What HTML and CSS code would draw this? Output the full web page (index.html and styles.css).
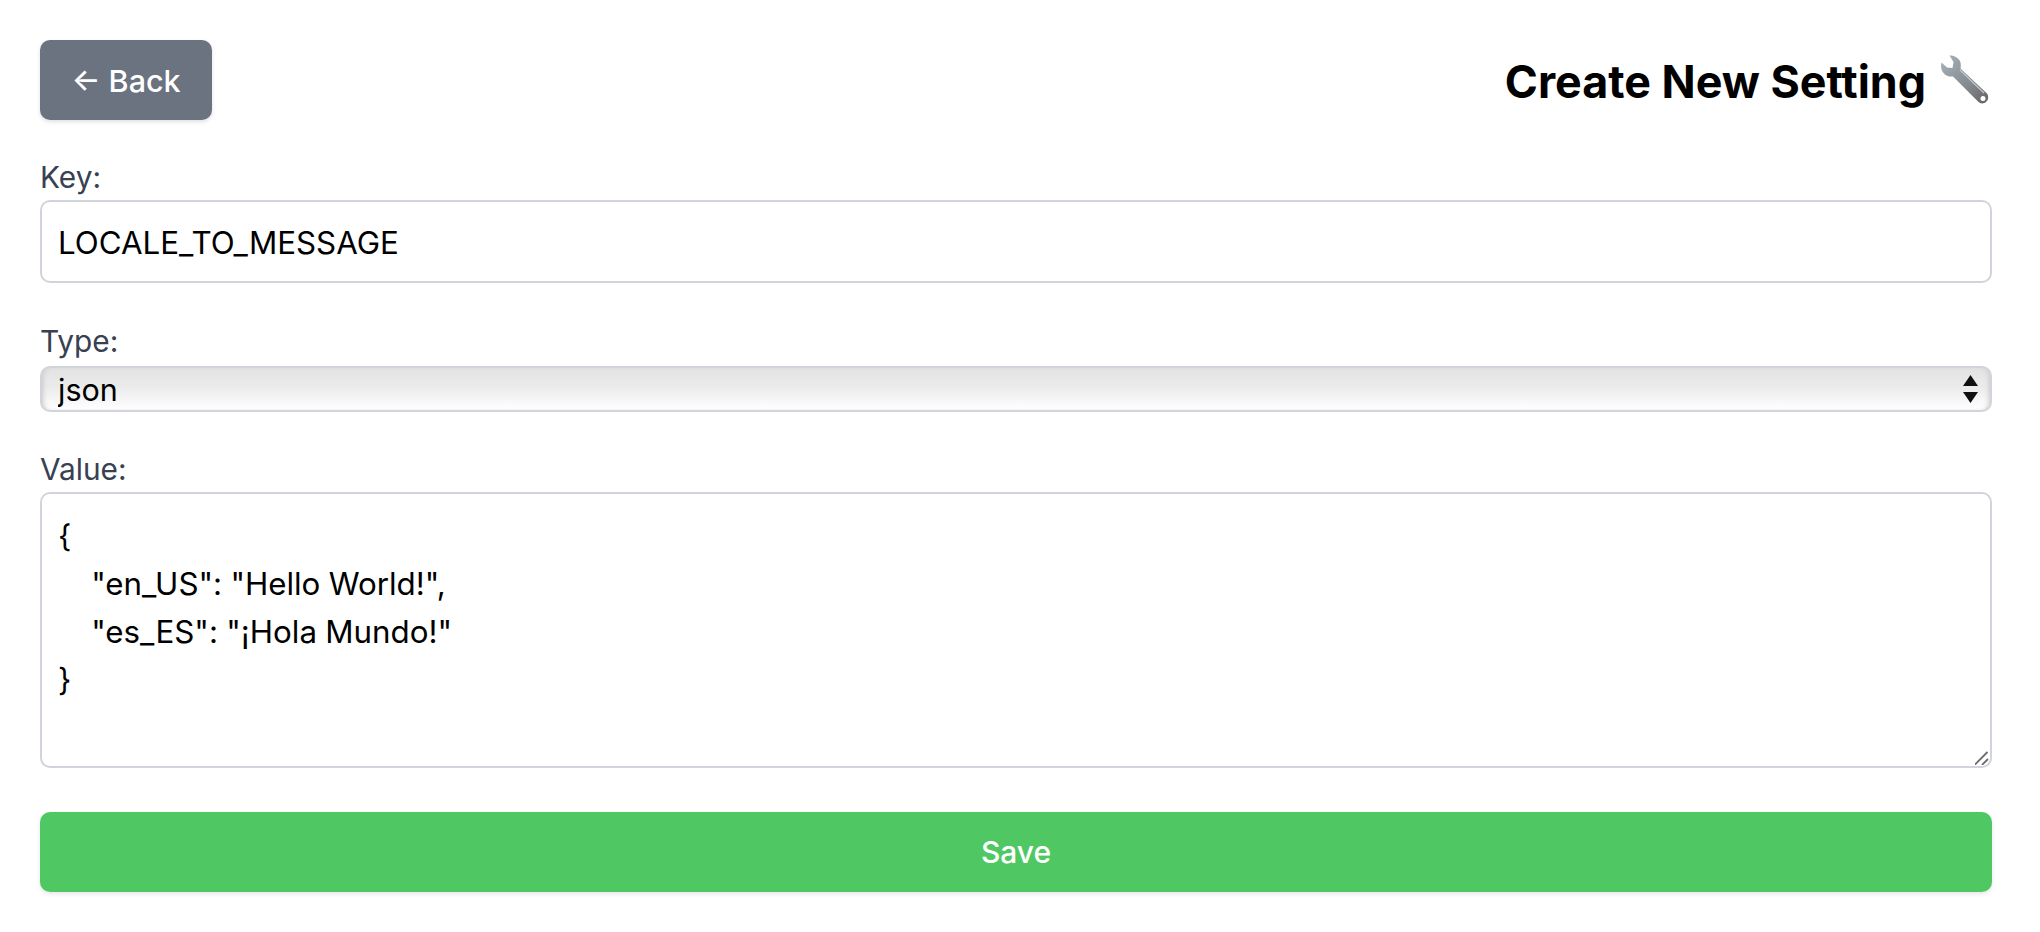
FILE: index.html
```html
<!DOCTYPE html>
<html lang="en">
  <head>
    <meta charset="UTF-8" />
    <meta name="viewport" content="width=device-width, initial-scale=1.0" />
    <title>Create New Setting</title>
    <link rel="stylesheet" href="styles.css">
  </head>
  <body>
    <div class="page">
      <div class="top-bar">
        <a class="back-btn" href="#">← Back</a>
        <h1 class="page-title">
          <span class="title-text">Create New Setting</span>
          <svg class="wrench" viewBox="0 0 48 50" width="48" height="50" aria-hidden="true">
            <defs>
              <linearGradient id="steel" x1="0" y1="0" x2="1" y2="1">
                <stop offset="0" stop-color="#aab3b9" />
                <stop offset="0.6" stop-color="#828a90" />
                <stop offset="1" stop-color="#6a6062" />
              </linearGradient>
            </defs>
            <path d="M8.500 0.500 C13 0.500 17 2.500 19 6 C20 8.500 20 11 19.500 13.500 L46 38.500 C48 41 47.500 45 45 47 C42 49.500 38.500 48.500 36.500 46 L12 21.500 C8.500 22 5 21 2.500 18 C0 15 -0.500 11 0.500 7.500 L6 12.500 L11.500 13 L12.500 7 Z" fill="url(#steel)" />
            <path d="M19 15 L43 38" stroke="#c3c9cd" stroke-width="1.200" fill="none" />
            <circle cx="42" cy="43.500" r="2.500" fill="#fff" />
          </svg>
        </h1>
      </div>

      <form class="setting-form">
        <div class="field field-key">
          <label class="field-label">Key:</label>
          <input class="text-input" type="text" value="LOCALE_TO_MESSAGE" />
        </div>

        <div class="field field-type">
          <label class="field-label">Type:</label>
          <div class="select-wrap">
            <select class="type-select">
              <option>json</option>
            </select>
            <svg class="select-arrows" viewBox="0 0 15 28" width="15" height="28" aria-hidden="true">
              <path d="M7.500 0 L15 11 L0 11 Z M0 17 L15 17 L7.500 28 Z" fill="#111" />
            </svg>
          </div>
        </div>

        <div class="field field-value">
          <label class="field-label">Value:</label>
          <div class="area-wrap">
            <textarea class="value-area" rows="5">{
    "en_US": "Hello World!",
    "es_ES": "¡Hola Mundo!"
}</textarea>
            <svg class="resize-grip" viewBox="0 0 14 14" width="14" height="14" aria-hidden="true">
              <path d="M0 13.500 L12.500 1 M7 14 L13 8" stroke="#6b6b6b" stroke-width="1.800" />
            </svg>
          </div>
        </div>

        <button class="save-btn" type="button">Save</button>
      </form>
    </div>
  </body>
</html>
```

FILE: styles.css
```css
* {
  box-sizing: border-box;
}

body {
  margin: 0;
  background: #fff;
  font-family: "Inter", sans-serif;
  color: #000;
}

.page {
  padding: 40px 48px 40px 40px;
}

.top-bar {
  display: flex;
  justify-content: space-between;
  align-items: center;
  margin-bottom: 39px;
}

.back-btn {
  display: flex;
  align-items: center;
  justify-content: center;
  width: 172px;
  height: 80px;
  background: #6b7280;
  color: #fff;
  font-size: 30.5px;
  font-weight: 500;
  border-radius: 10px;
  text-decoration: none;
  box-shadow: 0 2px 4px rgba(0, 0, 0, 0.12);
}

.page-title {
  display: flex;
  align-items: center;
  gap: 15px;
  margin: 0 3px 0 0;
  font-size: 44.8px;
  font-weight: 700;
}

.title-text {
  padding-top: 3px;
}

.wrench {
  flex: none;
}

.setting-form {
  display: flex;
  flex-direction: column;
}

.field-label {
  display: block;
  font-size: 29.8px;
  line-height: 36px;
  color: #374151;
  margin-bottom: 5px;
}

.field-key {
  margin-bottom: 40px;
}

.field-type {
  margin-bottom: 39px;
}

.field-type .field-label {
  margin-bottom: 7px;
}

.field-value {
  margin-bottom: 44px;
}

.text-input {
  display: block;
  width: 100%;
  height: 83px;
  padding: 2px 16px 0;
  border: 2px solid #d1d5db;
  border-radius: 10px;
  font: 31.3px "Inter", sans-serif;
  color: #000;
  outline: none;
}

.select-wrap {
  position: relative;
}

.type-select {
  display: block;
  width: 100%;
  height: 46px;
  padding: 0 16px;
  border: 2px solid #d1d5db;
  border-radius: 10px;
  font: 30.5px "Inter", sans-serif;
  color: #000;
  appearance: none;
  background: linear-gradient(to bottom, #e3e3e3 0%, #ebebeb 45%, #fff 100%);
  box-shadow: inset 4px 0 5px -3px #c8c8c8, inset -4px 0 5px -3px #c8c8c8;
}

.select-arrows {
  position: absolute;
  top: 9px;
  right: 14px;
}

.area-wrap {
  position: relative;
}

.value-area {
  display: block;
  width: 100%;
  height: 276px;
  padding: 18px 16px;
  border: 2px solid #d1d5db;
  border-radius: 10px;
  font: 31.3px/48px "Inter", sans-serif;
  word-spacing: -0.5px;
  color: #000;
  outline: none;
  resize: none;
}

.resize-grip {
  position: absolute;
  right: 3px;
  bottom: 3px;
}

.save-btn {
  display: block;
  width: 100%;
  height: 80px;
  border: none;
  border-radius: 10px;
  background: #4fc864;
  color: #fff;
  font: 500 30px "Inter", sans-serif;
  box-shadow: 0 2px 4px rgba(0, 0, 0, 0.1);
}
```
